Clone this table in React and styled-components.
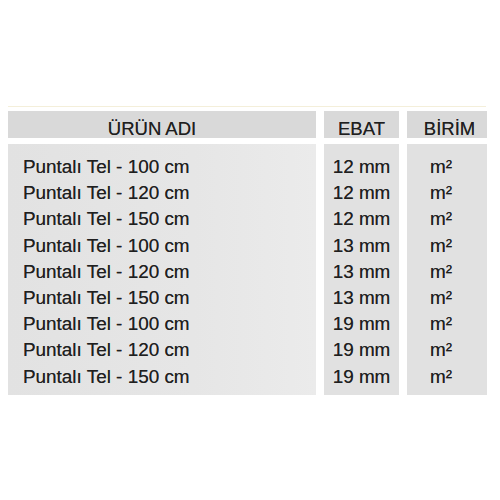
import React from "react";
import styled, { createGlobalStyle } from "styled-components";

const Global = createGlobalStyle`
  html, body { margin: 0; padding: 0; background: #ffffff; }
  body { font-family: "Liberation Sans", Arial, sans-serif; }
`;

const Page = styled.div`
  width: 500px;
  height: 500px;
  padding: 106px 0 0 8px;
  box-sizing: border-box;
`;

const TopLine = styled.div`
  width: 478px;
  height: 1px;
  background: #f4efda;
  margin-bottom: 4px;
`;

const Table = styled.div`
  display: grid;
  grid-template-columns: 308px 75px 80px;
  grid-template-rows: 27px 251px;
  column-gap: 8px;
  row-gap: 6px;
  color: #1f1f1f;
  font-size: 18.5px;
  text-shadow: 0 0 0.4px rgba(0, 0, 0, 0.6);
`;

const HeadCell = styled.div`
  background: #d9d9d9;
  box-sizing: border-box;
  height: 27px;
  padding-top: 9px;
  line-height: 18px;
  text-align: center;
  padding-right: ${(p) => p.$shiftLeft || 0}px;
  padding-left: ${(p) => p.$shiftRight || 0}px;
  white-space: nowrap;
`;

const BodyCell = styled.div`
  background: ${(p) =>
    p.$wide
      ? "linear-gradient(90deg, #e2e2e2 0%, #e6e6e6 60%, #ebebeb 100%)"
      : "#e1e1e1"};
  box-sizing: border-box;
  padding-top: 10px;
  font-size: 18.9px;
  padding-left: ${(p) => p.$padLeft || 0}px;
  padding-right: ${(p) => p.$padRight || 0}px;
  text-align: ${(p) => p.$align || "center"};
`;

const Line = styled.div`
  height: 26.2px;
  line-height: 26.2px;
  white-space: nowrap;
`;

const rows = [
  ["Puntalı Tel - 100 cm", "12 mm"],
  ["Puntalı Tel - 120 cm", "12 mm"],
  ["Puntalı Tel - 150 cm", "12 mm"],
  ["Puntalı Tel - 100 cm", "13 mm"],
  ["Puntalı Tel - 120 cm", "13 mm"],
  ["Puntalı Tel - 150 cm", "13 mm"],
  ["Puntalı Tel - 100 cm", "19 mm"],
  ["Puntalı Tel - 120 cm", "19 mm"],
  ["Puntalı Tel - 150 cm", "19 mm"],
];

export default function App() {
  return (
    <>
      <Global />
      <Page>
        <TopLine />
        <Table>
          <HeadCell $shiftLeft={20}>ÜRÜN ADI</HeadCell>
          <HeadCell>EBAT</HeadCell>
          <HeadCell $shiftRight={5}>BİRİM</HeadCell>
          <BodyCell $wide $align="left" $padLeft={15}>
            {rows.map((r, i) => (
              <Line key={i}>{r[0]}</Line>
            ))}
          </BodyCell>
          <BodyCell>
            {rows.map((r, i) => (
              <Line key={i}>{r[1]}</Line>
            ))}
          </BodyCell>
          <BodyCell $padRight={12}>
            {rows.map((r, i) => (
              <Line key={i}>m²</Line>
            ))}
          </BodyCell>
        </Table>
      </Page>
    </>
  );
}
